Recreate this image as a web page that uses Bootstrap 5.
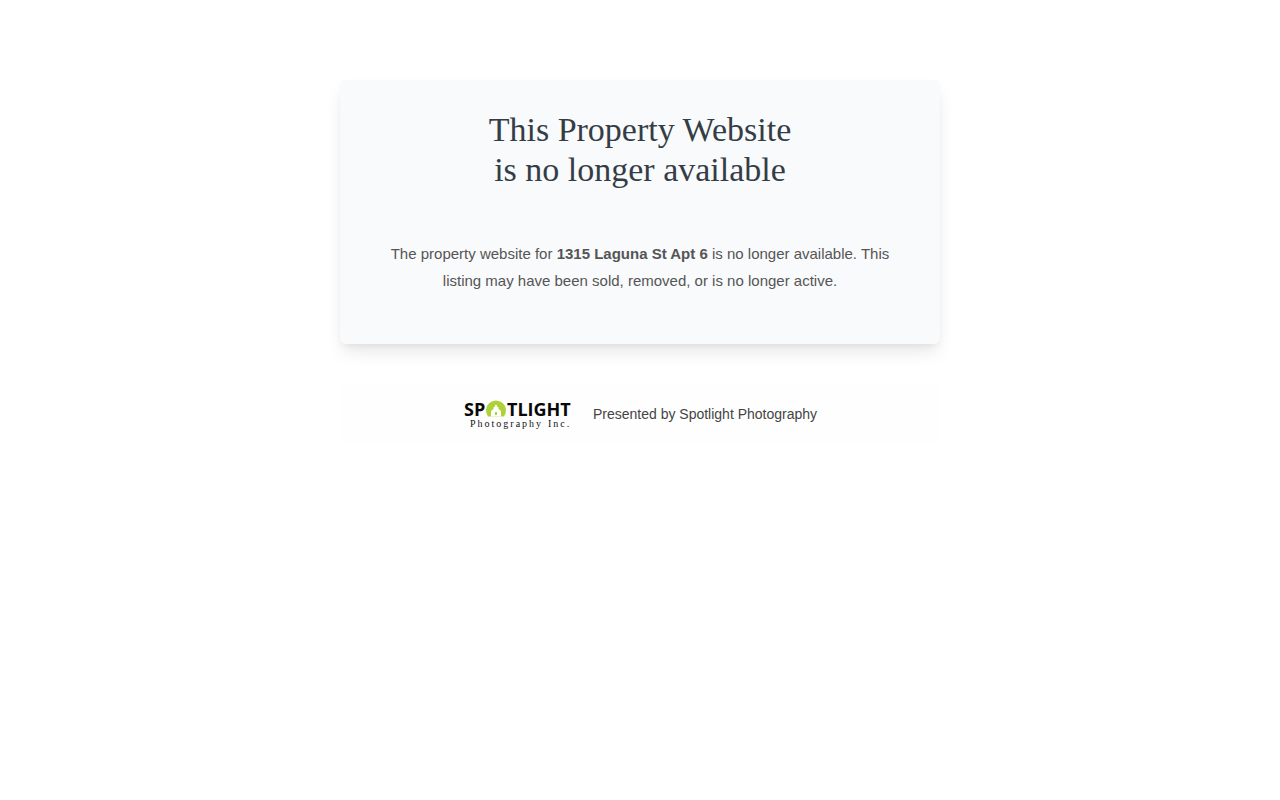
<!DOCTYPE html>
<html lang="en">
<head>
<meta charset="utf-8">
<meta name="viewport" content="width=device-width, initial-scale=1">
<title>This Property Website is no longer available</title>
<link href="https://cdn.jsdelivr.net/npm/bootstrap@5.3.0/dist/css/bootstrap.min.css" rel="stylesheet">
<style>
  body { font-family: "Liberation Sans", Arial, sans-serif; color: #444; background: #fff; }
  .notice-wrap { max-width: 600px; padding-top: 80px; }
  .notice-box { background: #f9fafc; border-radius: 6px; padding: 30px 40px 50px; box-shadow: 0 10px 18px -3px rgba(0,0,0,.1), 0 4px 6px -2px rgba(0,0,0,.05); }
  .notice-title { font-family: "Liberation Serif", "Times New Roman", serif; font-size: 34px; line-height: 40px; color: #343d46; margin-bottom: 50px; }
  .notice-text { font-size: 15px; line-height: 27px; color: #555; }
  .presenter { background: #fefefe; margin-top: 40px; padding: 15px; gap: 20px; font-size: 14px; line-height: 22px; }
  .logo-name { font: 700 18px "Open Sans", sans-serif; fill: #080808; }
  .logo-sub { font: 400 10px "Liberation Serif", serif; letter-spacing: 2px; fill: #111; }
</style>
</head>
<body>
<main class="notice-wrap container-fluid px-0 text-center">
  <section class="notice-box">
    <h1 class="notice-title fw-normal">This Property Website<br>is no longer available</h1>
    <p class="notice-text mb-0">The property website for <strong>1315 Laguna St Apt 6</strong> is no longer available. This listing may have been sold, removed, or is no longer active.</p>
  </section>
  <footer class="presenter d-flex flex-wrap align-items-center justify-content-center">
    <svg class="overflow-visible" width="110" height="30" viewBox="0 0 110 30" role="img" aria-label="Spotlight Photography Inc.">
      <text class="logo-name" x="1" y="17">SP</text>
      <text class="logo-name" x="44" y="17">TLIGHT</text>
      <path d="M25 17.500A10 10 0 1 1 41 17.500Z" fill="#aed136"/>
      <path d="M28 17.500V12L30.500 10V8.500L32 7.500V6.500L33 5.500L34 6.500V7.500L35.500 8.500V10L38 12V17.500Z" fill="#fff"/>
      <path d="M32 13h2v3h-2z" fill="#aed136"/>
      <text class="logo-sub" x="7" y="28">Photography</text>
      <text class="logo-sub" x="85" y="28">Inc.</text>
    </svg>
    <span>Presented by Spotlight Photography</span>
  </footer>
</main>
<script src="https://cdn.jsdelivr.net/npm/bootstrap@5.3.0/dist/js/bootstrap.bundle.min.js"></script>
</body>
</html>
